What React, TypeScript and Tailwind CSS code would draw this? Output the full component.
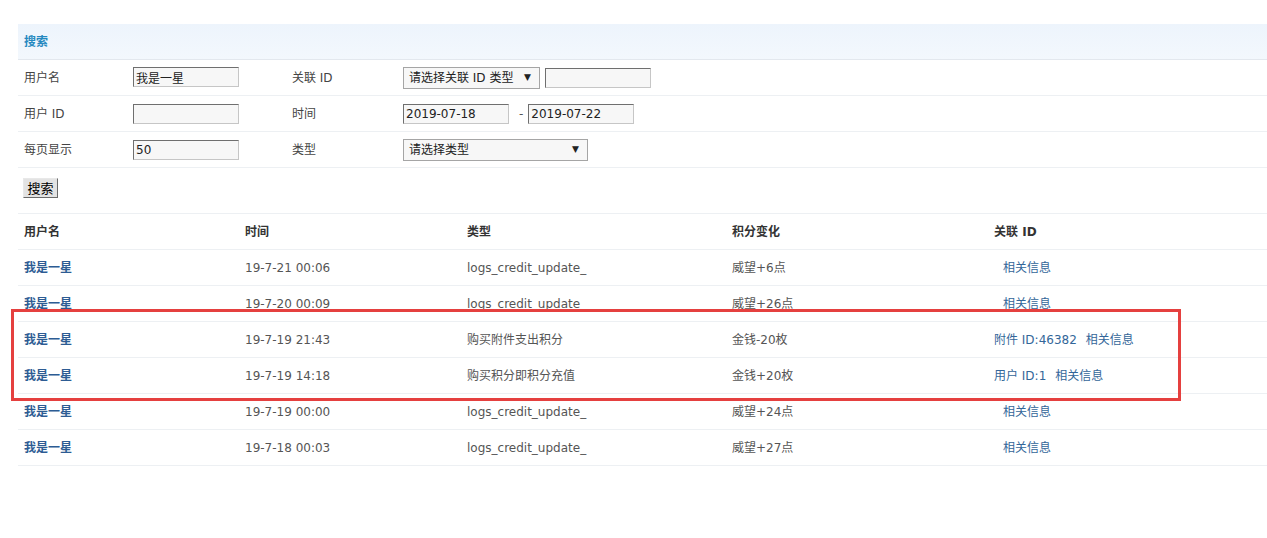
import React from "react";

const rows = [
  { time: "19-7-21 00:06", type: "logs_credit_update_", change: "威望+6点", rel: null },
  { time: "19-7-20 00:09", type: "logs_credit_update", change: "威望+26点", rel: null },
  { time: "19-7-19 21:43", type: "购买附件支出积分", change: "金钱-20枚", rel: "附件 ID:46382" },
  { time: "19-7-19 14:18", type: "购买积分即积分充值", change: "金钱+20枚", rel: "用户 ID:1" },
  { time: "19-7-19 00:00", type: "logs_credit_update_", change: "威望+24点", rel: null },
  { time: "19-7-18 00:03", type: "logs_credit_update_", change: "威望+27点", rel: null },
];

const inputCls =
  "h-[20px] border border-t-[#6f6f6f] border-l-[#6f6f6f] border-r-[#c6c6c6] border-b-[#c6c6c6] bg-[#f7f7f7] px-[2px] text-[12px] text-[#222] outline-none";

function FakeSelect({ label, width }: { label: string; width: string }) {
  return (
    <div
      className={`flex h-[22px] items-center justify-between border border-[#a5a5a5] bg-[#f7f7f7] pl-[5px] pr-[8px] text-[12px] text-[#222] ${width}`}
    >
      <span>{label}</span>
      <span className="text-[9px] text-[#222]">▼</span>
    </div>
  );
}

const formRow = "grid grid-cols-[109px_159px_111px_1fr] items-center h-[36px] border-b border-[#edf0f3]";
const tableRow = "grid grid-cols-[221px_222px_265px_262px_1fr] items-center h-[36px] border-b border-[#edf0f3]";

export default function App() {
  return (
    <div
      className="relative min-h-[538px] bg-white pt-[24px] pl-[18px] text-[12px] text-[#444]"
      style={{ fontFamily: '"DejaVu Sans", "Noto Sans CJK SC", sans-serif' }}
    >
      <div className="w-[1249px]">
        {/* search header */}
        <div className="flex h-[36px] items-center border-b border-[#e3e8ee] bg-gradient-to-b from-[#edf4fc] to-[#f3f8fd] pl-[6px] font-bold text-[#2589c0]">
          搜索
        </div>

        {/* form */}
        <div className={formRow}>
          <span className="pl-[6px]">用户名</span>
          <div className="pl-[6px]">
            <input className={`${inputCls} w-[106px]`} defaultValue="我是一星" />
          </div>
          <span className="pl-[6px]">关联 ID</span>
          <div className="flex items-center gap-[5px] pl-[6px]">
            <FakeSelect label="请选择关联 ID 类型" width="w-[137px]" />
            <input className={`${inputCls} w-[106px]`} />
          </div>
        </div>
        <div className={formRow}>
          <span className="pl-[6px]">用户 ID</span>
          <div className="pl-[6px]">
            <input className={`${inputCls} w-[106px]`} />
          </div>
          <span className="pl-[6px]">时间</span>
          <div className="flex items-center pl-[6px]">
            <input className={`${inputCls} w-[106px]`} defaultValue="2019-07-18" />
            <span className="ml-[10px] mr-[5px] text-[#555]">-</span>
            <input className={`${inputCls} w-[106px]`} defaultValue="2019-07-22" />
          </div>
        </div>
        <div className={formRow}>
          <span className="pl-[6px]">每页显示</span>
          <div className="pl-[6px]">
            <input className={`${inputCls} w-[106px]`} defaultValue="50" />
          </div>
          <span className="pl-[6px]">类型</span>
          <div className="pl-[6px]">
            <FakeSelect label="请选择类型" width="w-[185px]" />
          </div>
        </div>
        <div className="flex h-[46px] items-start border-b border-[#edf0f3] pl-[5px] pt-[10px]">
          <button className="h-[20px] w-[35px] border border-t-[#e8e8e8] border-l-[#e8e8e8] border-r-[#6a6a6a] border-b-[#6a6a6a] bg-[#e3e3e3] text-[13px] leading-none text-black">
            搜索
          </button>
        </div>

        {/* table */}
        <div className={`${tableRow} font-bold text-[#333]`}>
          <span className="pl-[6px]">用户名</span>
          <span className="pl-[6px]">时间</span>
          <span className="pl-[6px]">类型</span>
          <span className="pl-[6px]">积分变化</span>
          <span className="pl-[6px]">关联 ID</span>
        </div>
        {rows.map((r, i) => (
          <div key={i} className={tableRow}>
            <span className="pl-[6px] font-bold text-[#2d5c93]">我是一星</span>
            <span className="pl-[6px] text-[#555]">{r.time}</span>
            <span className="pl-[6px] text-[#555]">{r.type}</span>
            <span className="pl-[6px] text-[#555]">{r.change}</span>
            <span className="pl-[6px] text-[#336699]">
              {r.rel ? (
                <>
                  <span>{r.rel}</span>
                  <span className="ml-[9px]">相关信息</span>
                </>
              ) : (
                <span className="pl-[9px]">相关信息</span>
              )}
            </span>
          </div>
        ))}
      </div>

      {/* red annotation box */}
      <div className="pointer-events-none absolute left-[11px] top-[309px] h-[92px] w-[1170px] border-[3px] border-[#e5403f]" />
    </div>
  );
}
